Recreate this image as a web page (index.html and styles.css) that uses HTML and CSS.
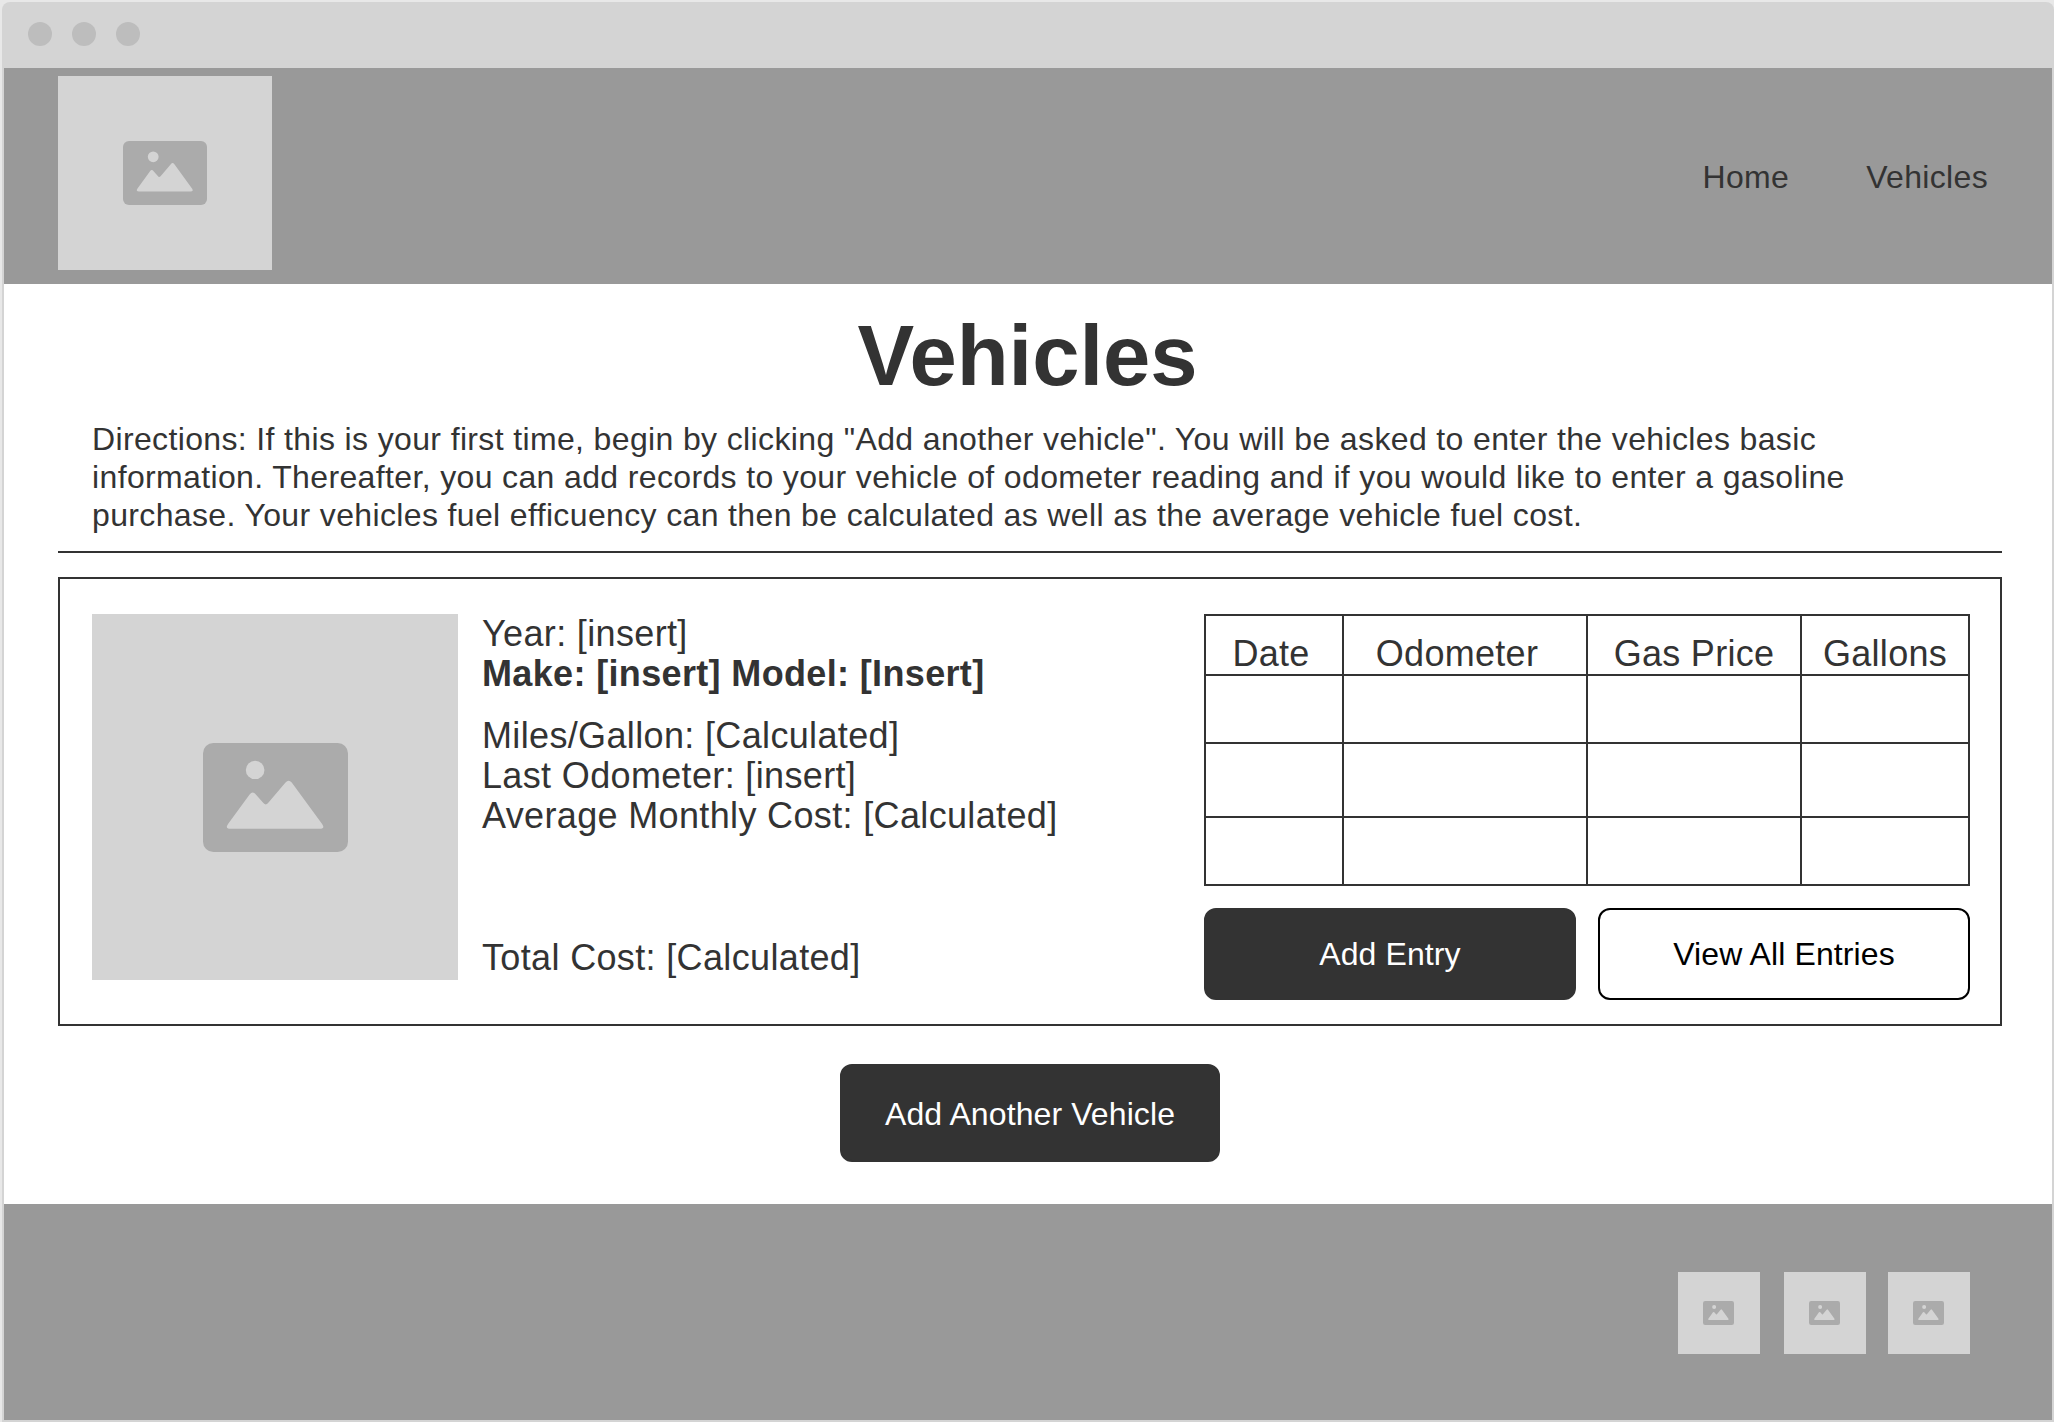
FILE: index.html
```html
<!DOCTYPE html>
<html lang="en">

<head>
    <meta charset="UTF-8">
    <title>Vehicles</title>
    <link rel="stylesheet" href="styles.css">
</head>

<body>
    <svg class="icon-defs" aria-hidden="true">
        <symbol id="picture" viewBox="0 0 84 64" preserveAspectRatio="none">
            <rect width="84" height="64" rx="6" fill="#ababab"></rect>
            <circle cx="30.2" cy="15.8" r="5.4" fill="#d4d4d4"></circle>
            <path d="M16 50.4 Q12.5 50.4 14.5 47.5 L27 30.2 Q28.8 28 30.6 30.2 L34.6 34.8 Q36.4 37.4 38.2 34.6 L47.8 23.2 Q49.6 21 51.4 23.2 L69 47.5 Q71 50.4 67.5 50.4 Z" fill="#d4d4d4"></path>
        </symbol>
    </svg>

    <div class="window">
        <!-- Browser chrome -->
        <div class="titlebar">
            <span class="dot"></span>
            <span class="dot"></span>
            <span class="dot"></span>
        </div>

        <header class="site-header">
            <div class="placeholder logo">
                <svg class="icon-logo"><use href="#picture"></use></svg>
            </div>
            <nav class="site-nav">
                <a href="#">Home</a>
                <a href="#">Vehicles</a>
            </nav>
        </header>

        <main class="content">
            <h1>Vehicles</h1>
            <p class="directions">Directions: If this is your first time, begin by clicking "Add another vehicle". You will be asked to enter the vehicles basic information. Thereafter, you can add records to your vehicle of odometer reading and if you would like to enter a gasoline purchase. Your vehicles fuel efficuency can then be calculated as well as the average vehicle fuel cost.</p>
            <hr class="divider">

            <!-- One vehicle -->
            <section class="vehicle-card">
                <div class="placeholder vehicle-photo">
                    <svg class="icon-photo"><use href="#picture"></use></svg>
                </div>

                <div class="vehicle-info">
                    <div class="info-group">
                        <div>Year: [insert]</div>
                        <div class="make-model">Make: [insert] Model: [Insert]</div>
                    </div>
                    <div class="info-group">
                        <div>Miles/Gallon: [Calculated]</div>
                        <div>Last Odometer: [insert]</div>
                        <div>Average Monthly Cost: [Calculated]</div>
                    </div>
                    <div class="total-cost">Total Cost: [Calculated]</div>
                </div>

                <div class="vehicle-log">
                    <table class="log-table">
                        <thead>
                            <tr>
                                <th class="col-date">Date</th>
                                <th class="col-odometer">Odometer</th>
                                <th class="col-price">Gas Price</th>
                                <th class="col-gallons">Gallons</th>
                            </tr>
                        </thead>
                        <tbody>
                            <tr class="row-a"><td></td><td></td><td></td><td></td></tr>
                            <tr class="row-b"><td></td><td></td><td></td><td></td></tr>
                            <tr class="row-a"><td></td><td></td><td></td><td></td></tr>
                        </tbody>
                    </table>
                    <div class="log-actions">
                        <button class="btn btn-dark">Add Entry</button>
                        <button class="btn btn-light">View All Entries</button>
                    </div>
                </div>
            </section>

            <div class="add-vehicle">
                <button class="btn btn-dark btn-add">Add Another Vehicle</button>
            </div>
        </main>

        <footer class="site-footer">
            <div class="placeholder social"><svg class="icon-social"><use href="#picture"></use></svg></div>
            <div class="placeholder social"><svg class="icon-social"><use href="#picture"></use></svg></div>
            <div class="placeholder social"><svg class="icon-social"><use href="#picture"></use></svg></div>
        </footer>
    </div>
</body>

</html>
```

FILE: styles.css
```css
/* General page */
body {
    margin: 0;
    background-color: #e8e8e8;
    font-family: 'Liberation Sans', Arial, sans-serif;
    color: #333;
}

.icon-defs {
    display: none;
}

/* Browser window frame */
.window {
    box-sizing: border-box;
    height: 1420px;
    margin: 2px 0 0 2px;
    padding: 0 2px 2px;
    border-radius: 8px 8px 0 0;
    background-color: #d4d4d4;
    display: flex;
    flex-direction: column;
}

.titlebar {
    height: 66px;
    flex: none;
    box-sizing: border-box;
    display: flex;
    align-items: center;
    gap: 20px;
    padding: 0 0 2px 24px;
}

.dot {
    width: 24px;
    height: 24px;
    border-radius: 50%;
    background-color: #bdbdbd;
}

.placeholder {
    background-color: #d4d4d4;
    display: flex;
    align-items: center;
    justify-content: center;
}

/* Header */
.site-header {
    height: 216px;
    flex: none;
    box-sizing: border-box;
    background-color: #999;
    display: flex;
    justify-content: space-between;
    padding: 8px 64px 14px 54px;
}

.logo {
    width: 214px;
}

.icon-logo {
    width: 84px;
    height: 64px;
}

.site-nav {
    display: flex;
    align-items: center;
    gap: 77px;
    padding-top: 9px;
}

.site-nav a {
    color: #333;
    text-decoration: none;
    font-size: 32px;
    letter-spacing: 0.33px;
}

/* Main content */
.content {
    flex: 1;
    background-color: #fff;
    padding: 0 50px 0 54px;
}

h1 {
    margin: 25px 0 0;
    padding-right: 5px;
    font-size: 85px;
    line-height: 94px;
    text-align: center;
}

.directions {
    margin: 17px 0 0;
    padding: 0 34px;
    font-size: 32px;
    line-height: 38px;
    letter-spacing: 0.36px;
}

.divider {
    margin: 17px 0 0;
    border: none;
    border-top: 2px solid #333;
}

/* Vehicle card */
.vehicle-card {
    margin-top: 24px;
    box-sizing: border-box;
    height: 449px;
    border: 2px solid #333;
    padding: 35px 32px 0;
    display: flex;
}

.vehicle-photo {
    width: 366px;
    height: 366px;
    flex: none;
}

.icon-photo {
    width: 145px;
    height: 109px;
}

.vehicle-info {
    width: 746px;
    height: 364px;
    flex: none;
    box-sizing: border-box;
    padding-left: 24px;
    font-size: 36px;
    line-height: 40px;
    letter-spacing: 0.35px;
    display: flex;
    flex-direction: column;
    gap: 22px;
}

.make-model {
    font-weight: bold;
}

.total-cost {
    margin-top: auto;
}

.vehicle-log {
    width: 766px;
}

/* Log table */
.log-table {
    width: 766px;
    table-layout: fixed;
    border-collapse: collapse;
    font-size: 36px;
}

.log-table th,
.log-table td {
    border: 2px solid #333;
    padding: 0;
}

.log-table th {
    height: 58px;
    font-weight: normal;
    vertical-align: bottom;
    line-height: 40px;
    letter-spacing: 0.3px;
}

.log-table .col-date { width: 130px; padding-right: 6px; }
.log-table .col-odometer { width: 226px; padding-right: 16px; }
.log-table .col-price { width: 212px; }
.log-table .col-gallons { width: 166px; }

.row-a td { height: 66px; }
.row-b td { height: 72px; }

/* Buttons */
.log-actions {
    margin-top: 22px;
    display: flex;
    gap: 22px;
}

.btn {
    box-sizing: border-box;
    font-family: inherit;
    font-size: 32px;
    border-radius: 12px;
    border: 2px solid #333;
    letter-spacing: 0.1px;
}

.log-actions .btn {
    flex: 1;
    height: 92px;
}

.btn-dark {
    background-color: #333;
    color: #fff;
}

.btn-light {
    background-color: #fff;
    color: #000;
    border-color: #000;
}

.add-vehicle {
    margin-top: 38px;
    display: flex;
    justify-content: center;
}

.btn-add {
    width: 380px;
    height: 98px;
    padding-top: 4px;
}

/* Footer */
.site-footer {
    height: 216px;
    flex: none;
    box-sizing: border-box;
    background-color: #999;
    display: flex;
    justify-content: flex-end;
    align-items: flex-start;
    gap: 22px;
    padding: 68px 82px 0 0;
}

.social {
    width: 82px;
    height: 82px;
    box-sizing: border-box;
    padding-right: 2px;
}

.social:first-child {
    margin-right: 2px;
}

.icon-social {
    width: 31px;
    height: 24px;
}
```
